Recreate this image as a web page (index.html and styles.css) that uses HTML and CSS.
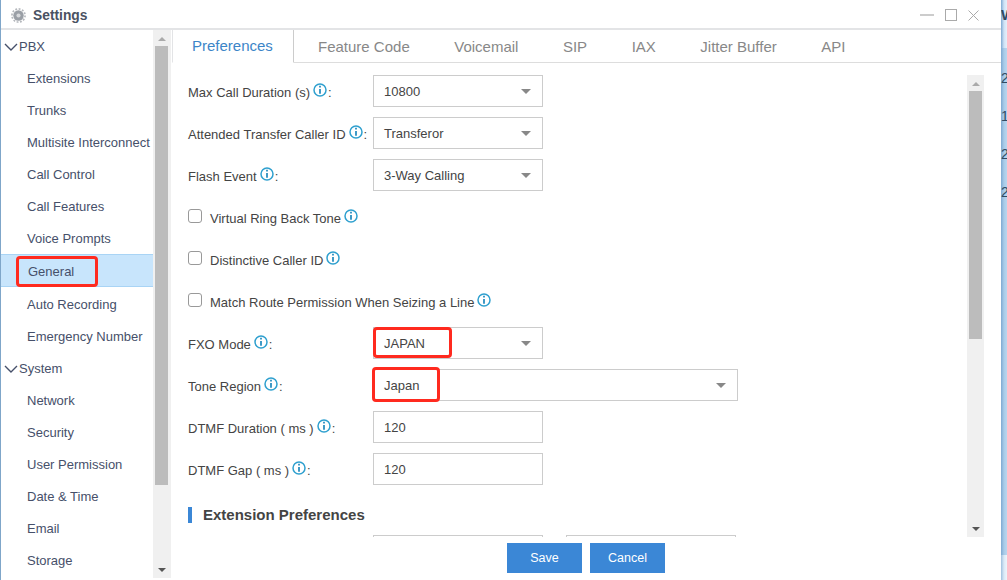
FILE: index.html
```html
<!DOCTYPE html>
<html lang="en">
<head>
<meta charset="utf-8">
<title>Settings</title>
<link rel="stylesheet" href="styles.css">
</head>
<body>
<svg class="defs" width="0" height="0"><symbol id="i" viewBox="0 0 14 14"><circle cx="7" cy="7" r="6" fill="#fff" stroke="#2fa0cf" stroke-width="1.5"/><path d="M7 2.8v1.8M7 6v4.8" stroke="#2b8fc0" stroke-width="1.8"/></symbol></svg>
<div class="desktop">
  <div class="window">
    <header class="titlebar">
      <svg class="gear" viewBox="0 0 16 16" width="15" height="15"><circle cx="8" cy="8" r="5.6" fill="#9a9fa6"/><circle cx="8" cy="8" r="7" fill="none" stroke="#b5b8bd" stroke-width="1.8" stroke-dasharray="2 1.66"/><circle cx="8" cy="8" r="2.2" fill="#d6d8db"/></svg>
      <span class="title">Settings</span>
      <div class="winbtns">
        <span class="min"></span>
        <span class="max"></span>
        <svg class="close" viewBox="0 0 11 11" width="11" height="11"><path d="M.5.5l10 10M10.5.5l-10 10" stroke="#aaa" fill="none"/></svg>
      </div>
    </header>
    <div class="body">
      <aside class="side">
        <nav class="menu">
          <div class="group"><svg class="chev" viewBox="0 0 14 8" width="14" height="8"><path d="M1 1l6 6 6-6" stroke="#46506a" stroke-width="1.4" fill="none"/></svg>PBX</div>
          <a class="item">Extensions</a>
          <a class="item">Trunks</a>
          <a class="item">Multisite Interconnect</a>
          <a class="item">Call Control</a>
          <a class="item">Call Features</a>
          <a class="item">Voice Prompts</a>
          <a class="item active">General</a>
          <a class="item">Auto Recording</a>
          <a class="item">Emergency Number</a>
          <div class="group"><svg class="chev" viewBox="0 0 14 8" width="14" height="8"><path d="M1 1l6 6 6-6" stroke="#46506a" stroke-width="1.4" fill="none"/></svg>System</div>
          <a class="item">Network</a>
          <a class="item">Security</a>
          <a class="item">User Permission</a>
          <a class="item">Date &amp; Time</a>
          <a class="item">Email</a>
          <a class="item">Storage</a>
        </nav>
        <div class="sbar sbar-left">
          <i class="up light"></i>
          <b class="thumb thumb-left"></b>
          <i class="down"></i>
        </div>
      </aside>
      <main class="main">
        <div class="tabs">
          <span class="tab on">Preferences</span>
          <span class="tab">Feature Code</span>
          <span class="tab">Voicemail</span>
          <span class="tab">SIP</span>
          <span class="tab">IAX</span>
          <span class="tab">Jitter Buffer</span>
          <span class="tab">API</span>
        </div>
        <div class="content">
          <form class="form">
            <div class="row"><label class="lab">Max Call Duration (s)<svg class="info"><use href="#i"/></svg>:</label><div class="sel">10800</div></div>
            <div class="row"><label class="lab">Attended Transfer Caller ID<svg class="info"><use href="#i"/></svg>:</label><div class="sel">Transferor</div></div>
            <div class="row"><label class="lab">Flash Event<svg class="info"><use href="#i"/></svg>:</label><div class="sel">3-Way Calling</div></div>
            <div class="row"><span class="box"></span><label class="chk">Virtual Ring Back Tone<svg class="info"><use href="#i"/></svg></label></div>
            <div class="row"><span class="box"></span><label class="chk">Distinctive Caller ID<svg class="info"><use href="#i"/></svg></label></div>
            <div class="row"><span class="box"></span><label class="chk">Match Route Permission When Seizing a Line<svg class="info"><use href="#i"/></svg></label></div>
            <div class="row"><label class="lab">FXO Mode<svg class="info"><use href="#i"/></svg>:</label><div class="sel">JAPAN</div></div>
            <div class="row"><label class="lab">Tone Region<svg class="info"><use href="#i"/></svg>:</label><div class="sel wide">Japan</div></div>
            <div class="row"><label class="lab">DTMF Duration ( ms )<svg class="info"><use href="#i"/></svg>:</label><div class="inp">120</div></div>
            <div class="row"><label class="lab">DTMF Gap ( ms )<svg class="info"><use href="#i"/></svg>:</label><div class="inp">120</div></div>
            <h3 class="section">Extension Preferences</h3>
            <div class="row cut"><div class="inp"></div><div class="inp second"></div></div>
          </form>
          <div class="sbar sbar-right">
            <i class="up light"></i>
            <b class="thumb thumb-right"></b>
            <i class="down"></i>
          </div>
        </div>
        <footer class="foot">
          <button class="btn" type="button">Save</button>
          <button class="btn" type="button">Cancel</button>
        </footer>
      </main>
    </div>
    <span class="mark mark-general"></span>
    <span class="mark mark-fxo"></span>
    <span class="mark mark-tone"></span>
  </div>
  <div class="behind">
    <div class="b-top"><span class="w">W</span></div>
    <div class="b-mid"><span>2</span><span>1</span><span>2</span><span>2</span></div>
    <div class="b-bot"></div>
  </div>
</div>
</body>
</html>
```
FILE: styles.css
```css
* { box-sizing: border-box; }
html, body { margin: 0; height: 100%; overflow: hidden; }
body { font-family: "Liberation Sans", Arial, sans-serif; font-size: 13px; color: #444; background: #fff; }
.defs { position: absolute; }
.desktop { display: flex; width: 1007px; height: 580px; }

.window { position: relative; width: 1001px; height: 580px; background: #fff; border-left: 1px solid #7fa6c9; display: flex; flex-direction: column; }
.titlebar { flex: none; height: 30px; border-bottom: 2px solid #e3e4e6; display: flex; align-items: center; padding: 2px 22px 0 10px; }
.gear { flex: none; margin-right: 7px; }
.title { font-size: 13.8px; font-weight: bold; color: #4a5262; }
.winbtns { margin-left: auto; display: flex; align-items: center; gap: 11px; }
.min { width: 14px; height: 2px; background: #ccc; }
.max { width: 12px; height: 12px; border: 1px solid #aaa; border-top-width: 1.5px; }

.body { flex: 1; display: flex; min-height: 0; }
.side { flex: none; width: 171px; display: flex; height: 548px; }
.menu { width: 152px; overflow: hidden; }
.group { height: 32px; display: flex; align-items: center; padding: 1px 0 0 3px; gap: 1px; color: #46506a; }
.chev { flex: none; }
.item { display: block; height: 32px; line-height: 33px; padding-left: 26px; color: #46506a; white-space: nowrap; }
.item.active { height: 33px; margin-bottom: 1px; padding-left: 27px; background: #c8e5fc; border-top: 1px solid #a9d4f5; border-bottom: 1px solid #a9d4f5; line-height: 33px; }

.sbar { flex: none; width: 18px; background: #f0f0f0; display: flex; flex-direction: column; align-items: center; }
.sbar-left { padding-right: 1px; }
.sbar-right { width: 17px; }
.thumb { display: block; width: 13px; background: #bcbcbc; }
.thumb-left { height: 439px; margin-top: 5px; }
.thumb-right { height: 248px; margin-top: 5px; }
.up, .down { display: block; width: 0; height: 0; border-left: 4px solid transparent; border-right: 4px solid transparent; }
.up { margin-top: 7px; border-bottom: 4px solid #999; }
.up.light { border-bottom-color: #aaa; }
.down { margin-top: auto; margin-bottom: 6px; border-top: 4px solid #555; }

.main { flex: 1; min-width: 0; display: flex; flex-direction: column; }
.tabs { flex: none; height: 33px; display: flex; border-bottom: 1px solid #ddd; }
.tab { height: 33px; line-height: 34px; padding: 0 22.25px; font-size: 15px; color: #888; white-space: nowrap; }
.tab.on { padding: 0 19px; margin-right: 1.75px; color: #3c85c8; background: #fff; border-left: 1px solid #e3e4e6; border-right: 1px solid #ccc; border-bottom: 1px solid #fff; height: 33px; width: 122px; line-height: 32px; }

.content { flex: none; height: 474px; display: flex; padding: 12px 17px 0 0; }
.form { flex: 1; min-width: 0; height: 462px; overflow: hidden; padding: 0 0 0 16px; }
.row { height: 42px; display: flex; align-items: flex-start; position: relative; }
.lab { width: 185px; flex: none; display: flex; align-items: center; height: 32px; padding-top: 2px; white-space: nowrap; color: #444; }
.info { flex: none; width: 14px; height: 14px; margin: -5px 1px 0 3px; }
.sel, .inp { width: 170px; height: 32px; line-height: 31px; border: 1px solid #ccc; padding-left: 10px; background: #fff; color: #444; position: relative; }
.sel::after { content: ""; position: absolute; right: 11px; top: 13px; border-left: 5px solid transparent; border-right: 5px solid transparent; border-top: 5px solid #888; }
.sel.wide { width: 365px; }
.box { flex: none; width: 14px; height: 14px; margin-top: 8px; border: 1px solid #999; border-radius: 3px; background: #fff; margin-right: 8px; }
.chk { height: 32px; padding-top: 2px; display: flex; align-items: center; white-space: nowrap; color: #444; }
.chk .info { margin-left: 3px; }
.section { margin: 12px 0; height: 16px; line-height: 16px; border-left: 4px solid #3b87d6; padding-left: 11px; font-size: 15px; font-weight: bold; color: #444; }
.row.cut { padding-left: 185px; }
.second { margin-left: 23px; }

.foot { flex: none; display: flex; justify-content: center; gap: 8px; height: 42px; padding: 6px 2px 0 0; }
.btn { width: 75px; height: 30px; border: 0; padding: 0 0 0 1px; background: #3b87d6; color: #fff; font: 12.5px "Liberation Sans", Arial, sans-serif; }

.mark { position: absolute; border: 3px solid #ff2a1f; border-radius: 4px; pointer-events: none; }
.mark-general { left: 15px; top: 256px; width: 82px; height: 31px; }
.mark-fxo { left: 372px; top: 327px; width: 79px; height: 31px; }
.mark-tone { left: 371px; top: 367px; width: 68px; height: 35px; }

.behind { flex: 1; min-width: 0; overflow: hidden; display: flex; flex-direction: column; color: #2f4a63; }
.b-top { flex: none; height: 48px; padding-top: 6px; background: linear-gradient(90deg, #7ea9d2, #cfe2f5 50%, #e6f0fa); }
.w { font-size: 15px; line-height: 18px; font-weight: bold; display: block; }
.b-mid { flex: 1; display: flex; flex-direction: column; gap: 22px; padding-top: 22px; font-size: 14px; line-height: 16px; background: linear-gradient(90deg, #7ea9d2, #a9cbe8 50%, #b9d6ee); }
.b-bot { flex: none; height: 25px; background: linear-gradient(90deg, #9fc0de, #dbe9f6 50%, #eef5fb); }
```
